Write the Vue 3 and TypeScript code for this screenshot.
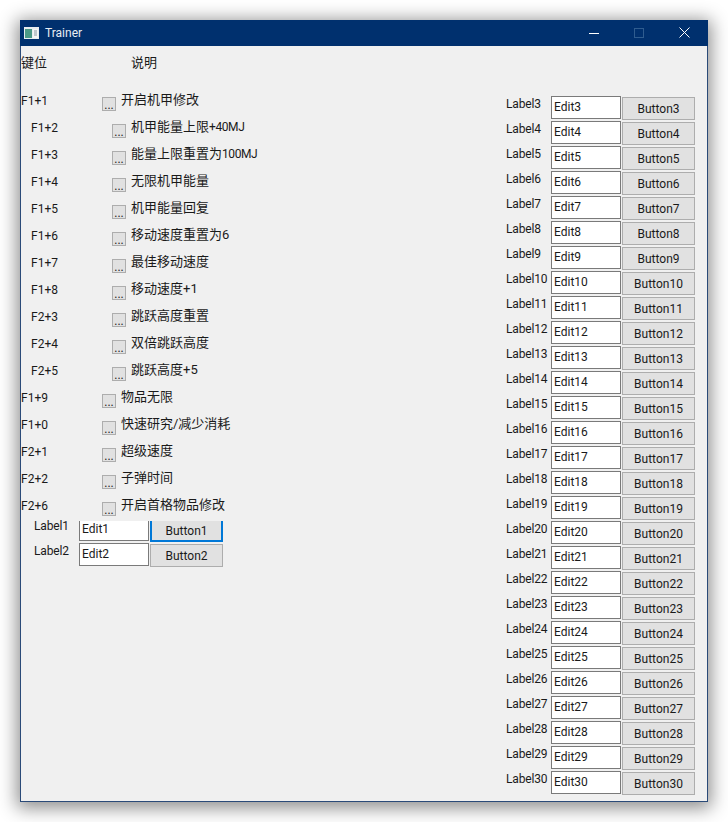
<script setup lang="ts">
interface Cheat { key: string; text: string; tail?: string; sub: boolean }
const cheats: Cheat[] = [
  { key: 'F1+1', text: '开启机甲修改', sub: false },
  { key: 'F1+2', text: '机甲能量上限', tail: '+40MJ', sub: true },
  { key: 'F1+3', text: '能量上限重置为', tail: '100MJ', sub: true },
  { key: 'F1+4', text: '无限机甲能量', sub: true },
  { key: 'F1+5', text: '机甲能量回复', sub: true },
  { key: 'F1+6', text: '移动速度重置为6', sub: true },
  { key: 'F1+7', text: '最佳移动速度', sub: true },
  { key: 'F1+8', text: '移动速度+1', sub: true },
  { key: 'F2+3', text: '跳跃高度重置', sub: true },
  { key: 'F2+4', text: '双倍跳跃高度', sub: true },
  { key: 'F2+5', text: '跳跃高度+5', sub: true },
  { key: 'F1+9', text: '物品无限', sub: false },
  { key: 'F1+0', text: '快速研究/减少消耗', sub: false },
  { key: 'F2+1', text: '超级速度', sub: false },
  { key: 'F2+2', text: '子弹时间', sub: false },
  { key: 'F2+6', text: '开启首格物品修改', sub: false },
]
const fields: number[] = Array.from({ length: 28 }, (_, i) => i + 3)
</script>

<template>
  <div class="desktop">
    <div class="window">
      <header class="titlebar">
        <svg class="appicon" width="15" height="12" viewBox="0 0 15 12">
          <rect x="0" y="0" width="15" height="12" fill="#e8eef0" />
          <rect x="1" y="2" width="7" height="9" fill="#4c9a86" />
          <rect x="9" y="2" width="5" height="9" fill="#f4f6f6" />
          <path d="M10 4h3M10 6h3M10 8h3" stroke="#8a9aa4" stroke-width="1" />
        </svg>
        <span class="title">Trainer</span>
        <div class="controls">
          <span class="ctl"><svg width="10" height="10" viewBox="0 0 10 10"><path d="M0 5.5h10" stroke="#fff" /></svg></span>
          <span class="ctl"><svg width="10" height="10" viewBox="0 0 10 10"><rect x="0.5" y="0.5" width="9" height="9" fill="none" stroke="#2f5c8f" /></svg></span>
          <span class="ctl"><svg width="11" height="11" viewBox="0 0 11 11"><path d="M0.5 0.5L10.5 10.5M10.5 0.5L0.5 10.5" stroke="#fff" /></svg></span>
        </div>
      </header>
      <main class="client">
        <section class="left">
          <div class="heads"><span class="head-key">键位</span><span>说明</span></div>
          <div v-for="c in cheats" :key="c.key" class="cheat" :class="{ sub: c.sub }">
            <span class="key">{{ c.key }}</span>
            <button class="dots" type="button">...</button>
            <span class="desc">{{ c.text }}<span v-if="c.tail" class="tail">{{ c.tail }}</span></span>
          </div>
          <div class="fields">
            <div class="field clipped">
              <span class="label">Label1</span>
              <input class="edit" value="Edit1" />
              <button class="action focused" type="button">Button1</button>
            </div>
            <div class="field">
              <span class="label">Label2</span>
              <input class="edit" value="Edit2" />
              <button class="action" type="button">Button2</button>
            </div>
          </div>
        </section>
        <section class="right">
          <div v-for="n in fields" :key="n" class="field">
            <span class="label">Label{{ n }}</span>
            <input class="edit" :value="`Edit${n}`" />
            <button class="action" type="button">Button{{ n }}</button>
          </div>
        </section>
      </main>
    </div>
  </div>
</template>

<style>
html, body { margin: 0; background: #fff; }
</style>

<style scoped>
.desktop {
  width: 728px;
  height: 822px;
  padding: 20px;
  box-sizing: border-box;
  overflow: hidden;
  font-family: Roboto, "Noto Sans CJK SC", sans-serif;
  font-size: 12px;
  color: #1a1a1a;
}
.window {
  height: 782px;
  background: #f0f0f0;
  box-shadow: 0 3px 17px 3px rgba(0, 0, 0, 0.45);
  display: flex;
  flex-direction: column;
}
.titlebar {
  height: 26px;
  flex: none;
  background: #00306e;
  color: #e8edf4;
  display: flex;
  align-items: center;
  padding-left: 4px;
  padding-bottom: 1px;
  box-sizing: border-box;
}
.appicon { flex: none; margin-top: 1px; }
.title { margin-left: 6px; }
.controls { margin-left: auto; display: flex; }
.ctl {
  width: 45px;
  display: flex;
  justify-content: center;
  align-items: center;
}
.ctl:last-child { width: 47px; }
.client {
  flex: 1;
  display: flex;
  border: 1px solid #2a4a78;
  border-top: 0;
}
.left { width: 485px; flex: none; }
.heads {
  display: flex;
  height: 30px;
  padding-bottom: 2px;
  margin-bottom: 9px;
  align-items: center;
  font-size: 13px;
}
.head-key { width: 110px; }
.cheat {
  height: 27px;
  display: flex;
  align-items: flex-start;
}
.cheat.sub { padding-left: 10px; }
.key { width: 81px; line-height: 16px; margin-top: 6px; }
.dots {
  width: 14px;
  height: 14px;
  margin-top: 10px;
  padding: 0;
  border: 1px solid #adadad;
  background: #e1e1e1;
  font: 12px/15px Roboto, sans-serif;
  color: #1a1a1a;
}
.desc { margin-left: 5px; margin-top: 4px; font-size: 13px; line-height: 18px; }
.tail { font-size: 12px; letter-spacing: -0.4px; }
.fields { padding-left: 13px; margin-top: 2px; }
.right { padding-top: 50px; }
.field {
  height: 25px;
  display: flex;
  align-items: flex-start;
}
.label { width: 45px; line-height: 16px; letter-spacing: -0.15px; }
.edit {
  width: 70px;
  height: 23px;
  box-sizing: border-box;
  margin: 0;
  padding: 0 2px 1px;
  border: 1px solid #7a7a7a;
  background: #fff;
  font: inherit;
  color: inherit;
  outline: none;
}
.action {
  width: 73px;
  height: 23px;
  margin: 1px 0 0 1px;
  padding: 0;
  box-sizing: border-box;
  border: 1px solid #adadad;
  background: #e1e1e1;
  font: inherit;
  color: inherit;
}
.action.focused { border: 2px solid #0078d7; }
.clipped { height: 22px; }
.clipped .label { margin-top: -3px; }
.clipped .edit { border-top: 0; height: 20px; padding-bottom: 4px; }
.clipped .action { border-top: 0; height: 21px; margin-top: 0; }
</style>
